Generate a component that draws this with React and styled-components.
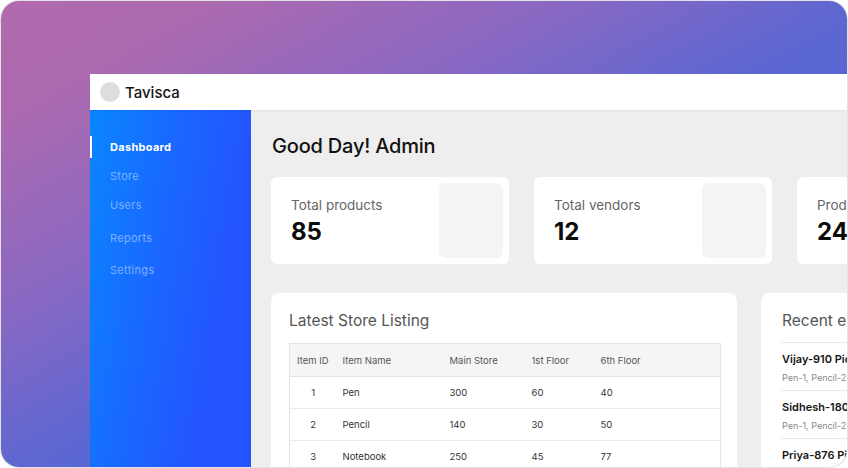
import React from 'react'
import styled, { createGlobalStyle } from 'styled-components'

const GlobalStyle = createGlobalStyle`
  html, body {
    margin: 0;
    padding: 0;
    background: #ffffff;
    font-family: Inter, "Liberation Sans", sans-serif;
  }
  * { box-sizing: border-box; }
`

const Frame = styled.div`
  margin: 1px;
  width: 846px;
  height: 466px;
  border-radius: 18px;
  overflow: hidden;
  box-shadow: 0 0 0 1px #e2e2e6;
  background: linear-gradient(to bottom right, #b16aad 0%, #ad6aaf 12%, #8c68c1 32%, #5c67d2 52%, #4366de 100%);
  padding: 73px 0 0 89px;
`

const Window = styled.div`
  width: 757px;
  height: 393px;
  background: #eeeeee;
  display: flex;
  flex-direction: column;
  overflow: hidden;
`

const Header = styled.header`
  height: 36px;
  flex-shrink: 0;
  background: #ffffff;
  display: flex;
  align-items: center;
  gap: 5px;
  padding-left: 10px;
  box-shadow: 0 1px 3px rgba(0, 0, 0, 0.06);
  position: relative;
  z-index: 1;
`

const LogoDot = styled.div`
  width: 20px;
  height: 20px;
  border-radius: 50%;
  background: #dedede;
`

const Brand = styled.span`
  font-size: 15px;
  font-weight: 500;
  color: #151515;
`

const Body = styled.div`
  flex: 1;
  display: flex;
  min-height: 0;
`

const Sidebar = styled.nav`
  width: 161px;
  flex-shrink: 0;
  background: linear-gradient(100deg, #0986ff 0%, #1a68ff 40%, #2354ff 75%);
  padding-top: 26px;
  display: flex;
  flex-direction: column;
`

const NavItem = styled.div`
  height: 22px;
  display: flex;
  align-items: center;
  padding-left: 18px;
  font-size: 11px;
  letter-spacing: 0.3px;
  font-weight: ${p => (p.active ? 700 : 400)};
  color: ${p => (p.active ? '#ffffff' : 'rgba(255,255,255,0.45)')};
  border-left: 2px solid ${p => (p.active ? '#ffffff' : 'transparent')};
  margin-bottom: ${p => p.mb || 0}px;
`

const Main = styled.main`
  flex: 1;
  min-width: 0;
  padding: 23px 0 0 20px;
  overflow: hidden;
`

const Title = styled.h1`
  margin: 0 0 18px 1px;
  font-size: 20px;
  font-weight: 500;
  color: #111;
  line-height: 26px;
  letter-spacing: -0.2px;
`

const Cards = styled.div`
  display: flex;
  gap: 25px;
  margin-bottom: 29px;
`

const StatCard = styled.div`
  width: 238px;
  height: 87px;
  flex-shrink: 0;
  background: #fff;
  border-radius: 6px;
  display: flex;
  justify-content: space-between;
  padding: 6px 6px 6px 20px;
`

const StatText = styled.div`
  display: flex;
  flex-direction: column;
  gap: 3px;
  padding-top: 13px;
`

const StatLabel = styled.span`
  font-size: 13.5px;
  color: #666;
  line-height: 18px;
  white-space: nowrap;
`

const StatValue = styled.span`
  font-size: 24px;
  font-weight: 700;
  color: #0c0c0c;
  line-height: 30px;
`

const StatIcon = styled.div`
  width: 64px;
  height: 75px;
  border-radius: 7px;
  background: #f4f4f4;
`

const Panels = styled.div`
  display: flex;
  gap: 24px;
`

const Panel = styled.section`
  width: ${p => p.w}px;
  flex-shrink: 0;
  height: 200px;
  background: #fff;
  border-radius: 8px;
  padding: ${p => p.pad};
`

const PanelTitle = styled.h2`
  margin: 0 0 ${p => p.mb}px;
  font-size: 15.5px;
  font-weight: 400;
  color: #555;
  line-height: 32px;
  white-space: nowrap;
`

const Table = styled.table`
  width: 100%;
  border-collapse: collapse;
  font-size: 9.5px;
  color: #333;
  border: 1px solid #e4e4e4;
`

const Th = styled.th`
  background: #f5f5f5;
  font-weight: 400;
  color: #555;
  text-align: left;
  height: 33px;
  padding-left: ${p => p.pl || 0}px;
  width: ${p => p.w}px;
  border-bottom: 1px solid #e4e4e4;
`

const Td = styled.td`
  height: 32px;
  padding-left: ${p => p.pl || 0}px;
  padding-right: ${p => p.pr || 0}px;
  text-align: ${p => p.align || 'left'};
  border-bottom: 1px solid #ebebeb;
`

const Order = styled.div`
  border-top: 1px solid #e8e8e8;
  padding: 8px 0 5px;
  white-space: nowrap;
`

const OrderName = styled.div`
  font-size: 11px;
  font-weight: 600;
  color: #151515;
  line-height: 16px;
`

const OrderItems = styled.div`
  font-size: 9px;
  color: #888;
  line-height: 14px;
  margin-top: 4px;
`

const nav = [
  { label: 'Dashboard', mb: 7, active: true },
  { label: 'Store', mb: 7 },
  { label: 'Users', mb: 11 },
  { label: 'Reports', mb: 10 },
  { label: 'Settings' },
]

const stats = [
  { label: 'Total products', value: '85' },
  { label: 'Total vendors', value: '12' },
  { label: 'Products sold', value: '240' },
]

const rows = [
  [1, 'Pen', 300, 60, 40],
  [2, 'Pencil', 140, 30, 50],
  [3, 'Notebook', 250, 45, 77],
  [4, 'Eraser', 90, 20, 15],
]

const orders = [
  { name: 'Vijay-910 Picked items', items: 'Pen-1, Pencil-2, Notebook-1' },
  { name: 'Sidhesh-180 Picked items', items: 'Pen-1, Pencil-2, Eraser-1' },
  { name: 'Priya-876 Picked items', items: 'Pen-1, Pencil-2' },
]

export default function App() {
  return (
    <>
      <GlobalStyle />
      <Frame>
        <Window>
          <Header>
            <LogoDot />
            <Brand>Tavisca</Brand>
          </Header>
          <Body>
            <Sidebar>
              {nav.map(n => (
                <NavItem key={n.label} active={n.active} mb={n.mb}>
                  {n.label}
                </NavItem>
              ))}
            </Sidebar>
            <Main>
              <Title>Good Day! Admin</Title>
              <Cards>
                {stats.map(s => (
                  <StatCard key={s.label}>
                    <StatText>
                      <StatLabel>{s.label}</StatLabel>
                      <StatValue>{s.value}</StatValue>
                    </StatText>
                    <StatIcon />
                  </StatCard>
                ))}
              </Cards>
              <Panels>
                <Panel w={466} pad="12px 16px 0 18px">
                  <PanelTitle mb={6}>Latest Store Listing</PanelTitle>
                  <Table>
                    <thead>
                      <tr>
                        <Th w={53} pl={7}>Item ID</Th>
                        <Th w={107}>Item Name</Th>
                        <Th w={82}>Main Store</Th>
                        <Th w={69}>1st Floor</Th>
                        <Th>6th Floor</Th>
                      </tr>
                    </thead>
                    <tbody>
                      {rows.map(r => (
                        <tr key={r[0]}>
                          <Td align="center" pr={6}>{r[0]}</Td>
                          <Td>{r[1]}</Td>
                          <Td>{r[2]}</Td>
                          <Td>{r[3]}</Td>
                          <Td>{r[4]}</Td>
                        </tr>
                      ))}
                    </tbody>
                  </Table>
                </Panel>
                <Panel w={300} pad="12px 16px 0 21px">
                  <PanelTitle mb={5}>Recent entries</PanelTitle>
                  {orders.map(o => (
                    <Order key={o.name}>
                      <OrderName>{o.name}</OrderName>
                      <OrderItems>{o.items}</OrderItems>
                    </Order>
                  ))}
                </Panel>
              </Panels>
            </Main>
          </Body>
        </Window>
      </Frame>
    </>
  )
}
